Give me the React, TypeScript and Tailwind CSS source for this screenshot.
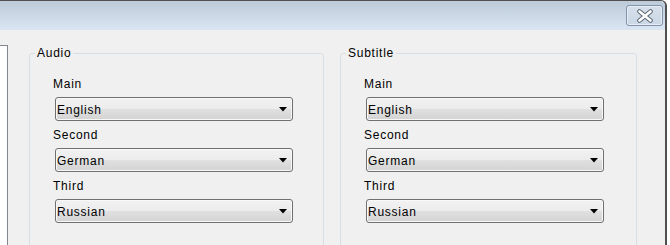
import React from "react";

const ComboBox = ({ value }: { value: string }) => (
  <div className="ml-[2px] flex h-[24px] w-[238px] items-center justify-between rounded-[3px] border border-[#707070] bg-[linear-gradient(to_bottom,#f2f2f2_0%,#ececec_48%,#e0e0e0_52%,#d3d3d3_100%)] pr-[5px] pt-[1px] shadow-[inset_0_0_0_1px_#f8f8f8]">
    <span className="pl-[1px] leading-[14px]">{value}</span>
    <svg width="8" height="5" viewBox="0 0 8 5">
      <path d="M0 0h8L4 4.5z" fill="#000" />
    </svg>
  </div>
);

const GroupBox = ({ title, width }: { title: string; width: string }) => {
  const rows = [
    { label: "Main", value: "English" },
    { label: "Second", value: "German" },
    { label: "Third", value: "Russian" },
  ];
  return (
    <fieldset
      className={`${width} h-[220px] shrink-0 rounded-[3px] border border-[#d5dfe5]`}
    >
      <legend className="ml-[5px] px-[2px] leading-[14px]">{title}</legend>
      <div className="flex flex-col pl-[23px] pt-[17px]">
        {rows.map((r, i) => (
          <div key={r.label} className={i > 0 ? "mt-[7px]" : ""}>
            <div className="mb-[6px] leading-[14px]">{r.label}</div>
            <ComboBox value={r.value} />
          </div>
        ))}
      </div>
    </fieldset>
  );
};

export default function App() {
  return (
    <div className="h-[245px] w-[670px] overflow-hidden bg-white font-['Liberation_Sans',Arial,sans-serif] text-[12px] tracking-[0.75px] text-black">
      <div className="flex h-full w-[667px] flex-col overflow-hidden rounded-tr-[6px] border-r-2 border-t border-[#505050] bg-[#f0f0f0]">
        {/* title bar */}
        <div className="flex h-[29px] shrink-0 items-start justify-end bg-gradient-to-b from-[#bccad9] to-[#dbe6f3] pr-[2px] pt-[4px]">
          <div className="flex h-[21px] w-[37px] items-center justify-center rounded-[3px] border border-[#8393ab] bg-gradient-to-b from-[#d6e0eb] to-[#cbd7e5] shadow-[inset_0_0_0_1px_#e6edf5]">
            <svg width="18" height="14" viewBox="0 0 18 14">
              <path
                d="M3.5 2.5l11 9M14.5 2.5l-11 9"
                stroke="#5d6878"
                strokeWidth="4.6"
                strokeLinecap="round"
                fill="none"
              />
              <path
                d="M3.5 2.5l11 9M14.5 2.5l-11 9"
                stroke="#ffffff"
                strokeWidth="2.6"
                strokeLinecap="round"
                fill="none"
              />
            </svg>
          </div>
        </div>

        {/* body */}
        <div className="flex min-h-0 flex-1">
          <div className="mt-[15px] w-[8px] shrink-0 border-r border-t border-[#828790] bg-white" />
          <div className="ml-[21px] flex gap-[16px] pt-[16px]">
            <GroupBox title="Audio" width="w-[295px]" />
            <GroupBox title="Subtitle" width="w-[297px]" />
          </div>
        </div>
      </div>
    </div>
  );
}
